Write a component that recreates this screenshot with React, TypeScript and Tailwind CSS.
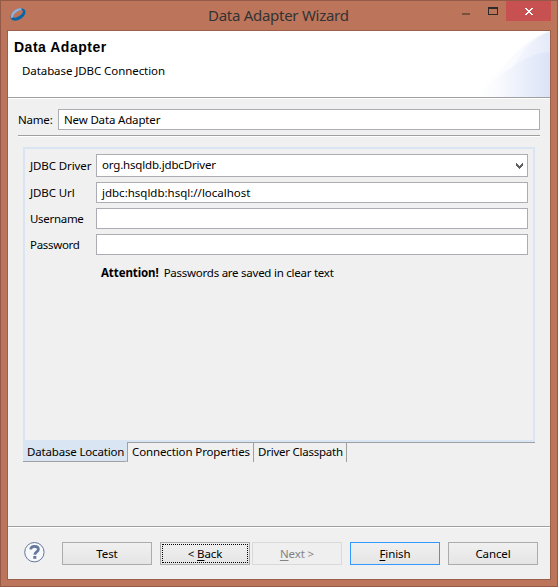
import type { ReactNode } from "react";

function TitleBar() {
  return (
    <header className="relative h-[29px] flex items-start justify-end pr-[6px]">
      <svg className="absolute left-[8px] top-[5px]" width="19" height="17" viewBox="0 0 19 17">
        <g transform="rotate(-33 9 8.5)">
          <path
            fillRule="evenodd"
            d="M0.8 8.5a8.2 5.2 0 1 0 16.4 0a8.2 5.2 0 1 0-16.4 0zM3.4 7.9a5.8 2.6 0 1 0 11.6 0a5.8 2.6 0 1 0-11.6 0z"
            fill="#0765a8"
          />
          <path d="M1.2 7.8C2.4 4.6 5.2 3.2 8.8 3.2c2.9 0 5.200 .7 6.500 2.300l-1.200 1.400C12.800 5.900 11 5.600 9.200 5.600c-2.800 0-5 .9-5.800 2.600z" fill="#94b3dc" />
        </g>
      </svg>
      <h1 className="absolute left-[207px] top-[4px] text-[15px] leading-[20px] tracking-[-0.28px] text-[#333333] whitespace-nowrap">
        Data Adapter Wizard
      </h1>
      <svg width="45" height="20" viewBox="0 0 45 20" shapeRendering="crispEdges">
        <path d="M1 12h8v2H1z" fill="#78503f" />
        <path fillRule="evenodd" d="M27 6h10v8H27zM28 8v5h8V8z" fill="#2b2b2b" />
      </svg>
      <button className="h-[20px] w-[45px] bg-[#c75050] flex justify-center pt-[7px]">
        <svg width="8" height="7" viewBox="0 0 8 7" shapeRendering="crispEdges" fill="#fff">
          <path d="M0 0h2v1h1v1h2V1h1V0h2v1H7v1H6v1H5v1h1v1h1v1h1v1H6V6H5V5H3v1H2v1H0V6h1V5h1V4h1V3H2V2H1V1H0z" />
        </svg>
      </button>
    </header>
  );
}

function Banner() {
  return (
    <section className="relative h-[67px] shrink-0 bg-white border-b border-[#a0a0a0] text-black">
      <svg className="absolute right-0 top-0" width="72" height="66" viewBox="0 0 72 66">
        <defs>
          <linearGradient id="outer">
            <stop offset="0" stopColor="#fff" />
            <stop offset="0.5" stopColor="#fafbfe" />
            <stop offset="1" stopColor="#eff3fc" />
          </linearGradient>
          <linearGradient id="middle">
            <stop offset="0" stopColor="#fcfdff" />
            <stop offset="0.4" stopColor="#f3f6fd" />
            <stop offset="1" stopColor="#e4eaf8" />
          </linearGradient>
          <linearGradient id="inner">
            <stop offset="0" stopColor="#fff" />
            <stop offset="0.25" stopColor="#fafbfe" />
            <stop offset="0.6" stopColor="#ebf0fb" />
            <stop offset="1" stopColor="#dbe3f6" />
          </linearGradient>
        </defs>
        <path d="M0 65C7 56 11 51 17 44C22 38 28 31 34 26C43 17 55 5 72 0V66H0z" fill="url(#outer)" />
        <path d="M21 66C22 58 24 53 27 47C30 41 33 37 37 32C44 22 55 6 72 1V66z" fill="url(#middle)" />
        <path d="M0 65C6 58 11 54 17 49C23 44 28 40 34 36C44 29 56 22 72 21V66H0z" fill="url(#inner)" />
      </svg>
      <h2 className="relative pl-[6px] pt-[7px] text-[14px] leading-[18px] tracking-[0.5px] font-bold font-['Liberation_Sans',Arial,sans-serif]">
        Data Adapter
      </h2>
      <p className="relative pl-[14px] pt-[7px] leading-[16px] tracking-[-0.08px]">Database JDBC Connection</p>
    </section>
  );
}

function Field({ label, value, combo, tight }: { label: string; value?: string; combo?: boolean; tight?: boolean }) {
  return (
    <div className="flex items-center">
      <label className={`w-[71px] shrink-0 pl-[5px] ${tight ? "tracking-[-0.3px]" : "tracking-[-0.1px]"}`}>{label}</label>
      <div
        className={`flex w-[432px] items-center justify-between border border-[#abadb3] bg-white pl-[5px] pr-[4px] ${
          combo ? "h-[23px]" : "h-[21px]"
        }`}
      >
        <span className={combo ? "pb-[2px] tracking-[-0.17px]" : ""}>{value}</span>
        {combo && (
          <svg width="7" height="6" viewBox="0 0 7 6" shapeRendering="crispEdges" fill="#606060">
            <path d="M0 0h1v1h1v1h1v1h1V2h1V1h1V0h1v3H6v1H5v1H4v1H3V5H2V4H1V3H0z" />
          </svg>
        )}
      </div>
    </div>
  );
}

function PushButton({ children, look = "normal" }: { children: ReactNode; look?: "normal" | "focus" | "disabled" | "default" }) {
  const looks = {
    normal: "border-[#acacac] bg-linear-to-b from-[#f0f0f0] to-[#e5e5e5]",
    focus: "border-[#acacac] bg-linear-to-b from-[#f0f0f0] to-[#e5e5e5]",
    disabled: "border-[#d9d9d9] bg-[#efefef] text-[#838383]",
    default: "border-[#3399ff] bg-linear-to-b from-[#f0f0f0] to-[#e5e5e5]",
  };
  return (
    <button className={`relative h-[23px] w-[90px] border pt-px leading-[20px] tracking-[-0.1px] ${looks[look]}`}>
      {look === "focus" && <span className="absolute inset-[1px] border border-dotted border-black" />}
      {children}
    </button>
  );
}

function Key({ children }: { children: ReactNode }) {
  return <span className="underline decoration-1 underline-offset-2">{children}</span>;
}

export default function App() {
  return (
    <div className="flex h-[587px] w-[558px] flex-col border border-[#955947] bg-[#bc755b] px-[6px] pb-[6px] font-['Noto_Sans','Open_Sans',sans-serif] text-[11.5px] text-black cursor-default">
      <div className="-mx-[6px]">
        <TitleBar />
      </div>
      <main className="flex flex-1 min-h-0 flex-col border border-[#9d5f49] bg-[#f0f0f0]">
        <Banner />
        <div className="h-[428px] shrink-0 border-t border-white pl-[10px] pr-[10px] pt-[10px]">
          <div className="flex h-[21px] items-center">
            <label className="w-[40px] tracking-[-0.2px]">Name:</label>
            <div className="flex h-[21px] w-[482px] items-center border border-[#abadb3] bg-white pl-[5px] tracking-[-0.16px]">
              New Data Adapter
            </div>
          </div>
          <hr className="mt-[5px] h-[2px] border-0 border-t border-[#a0a0a0] bg-white" />
          <section className="ml-[5px] mt-[10px] h-[295px] w-[512px] border-2 border-[#d9e5f2] pt-[5px]">
            <div className="flex flex-col gap-[5px]">
              <Field label="JDBC Driver" value="org.hsqldb.jdbcDriver" combo />
              <Field label="JDBC Url" value="jdbc:hsqldb:hsql://localhost" />
              <Field label="Username" tight />
              <Field label="Password" tight />
            </div>
            <p className="flex gap-[5px] pl-[76px] pt-[10px] leading-[16px]">
              <b className="tracking-[-0.1px]">Attention!</b>
              <span className="tracking-[-0.25px]">Passwords are saved in clear text</span>
            </p>
          </section>
          <nav className="ml-[5px] flex h-[20px] w-[512px] leading-[18px] whitespace-nowrap">
            <div className="h-[20px] w-[104px] rounded-br-[2px] border-b border-[#a0a0a0] bg-[#d9e5f2] pl-[4px] pt-px tracking-[-0.17px]">
              Database Location
            </div>
            <div className="h-[20px] w-[127px] border-x border-t border-[#a0a0a0] pl-[4px] tracking-[-0.12px]">Connection Properties</div>
            <div className="h-[20px] w-[93px] border-r border-t border-[#a0a0a0] pl-[4px] tracking-[-0.24px]">Driver Classpath</div>
            <div className="flex-1 border-t border-[#a0a0a0]" />
          </nav>
        </div>
        <footer className="flex flex-1 items-start border-t border-[#a0a0a0] pl-[16px] pt-[15px] shadow-[inset_0_1px_0_#fff]">
          <svg className="mr-[17px]" width="21" height="21" viewBox="0 0 21 21" fill="none">
            <circle cx="10.4" cy="10.2" r="9.7" fill="#f6f8fb" stroke="#63789a" />
            <path d="M6.6 7.400C6.900 5.300 8.400 4.300 10.500 4.300c2.300 0 3.900 1 3.900 2.900 0 2.600-3.600 2.700-3.600 5.500" stroke="#63789a" strokeWidth="2.7" />
            <path d="M9.300 14h3v2.800h-3z" fill="#63789a" />
          </svg>
          <PushButton>Test</PushButton>
          <div className="ml-[8px] flex gap-[2px]">
            <PushButton look="focus">&lt; <Key>B</Key>ack</PushButton>
            <PushButton look="disabled"><Key>N</Key>ext &gt;</PushButton>
          </div>
          <div className="ml-[8px] flex gap-[8px]">
            <PushButton look="default"><Key>F</Key>inish</PushButton>
            <PushButton>Cancel</PushButton>
          </div>
        </footer>
      </main>
    </div>
  );
}
